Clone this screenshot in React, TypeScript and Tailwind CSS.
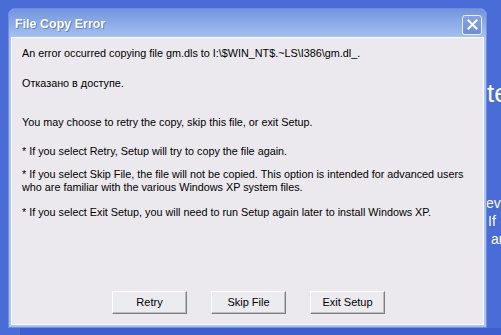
import React from "react";

const font = { fontFamily: '"Liberation Sans", Arial, sans-serif' };

function Btn({ label }: { label: string }) {
  return (
    <div className="w-[75px] h-[23px] flex items-center justify-center text-[11px] text-black bg-[#ecebef] border border-t-white border-l-white border-b-[#7d7d7d] border-r-[#7d7d7d] shadow-[inset_-1px_-1px_0_#bdbdc4]">
      {label}
    </div>
  );
}

export default function App() {
  return (
    <div className="w-[501px] h-[335px] bg-[#4a6cd6] relative overflow-hidden" style={font}>
      <div className="absolute left-[487px] top-[80px] text-white text-[26px] leading-none whitespace-nowrap">te</div>
      <div className="absolute left-[486px] top-[194px] text-white text-[14px] leading-[18px]">
        <div>ev</div>
        <div className="ml-[2px]">If</div>
        <div className="ml-[5px]">ar</div>
      </div>
      <div className="absolute left-0 right-0 bottom-0 h-[7px] bg-[#3e5ed0] ml-[20px]" />
      <div className="relative ml-[8px] mt-[8px] w-[479px] h-[320px] rounded-t-[7px] bg-[#a9c4f0] flex flex-col border border-[#6b8fdc]">
        <div className="h-[28px] rounded-t-[6px] bg-[linear-gradient(to_bottom,#7394de_0%,#86a6e6_40%,#a4c1ef_100%)] flex items-center justify-between pl-[6px] pr-[4px]">
          <span className="text-white font-bold text-[12.5px] mt-[2px] drop-shadow-[1px_1px_0_rgba(60,90,180,0.5)]">File Copy Error</span>
          <div className="w-[20px] h-[20px] rounded-[3px] border border-[#e8efff] bg-[linear-gradient(to_bottom,#85a3e4,#6d8edb)] flex items-center justify-center mt-[3px]">
            <svg width="11" height="11" viewBox="0 0 11 11">
              <path d="M1.5 1.5 L9.5 9.5 M9.5 1.5 L1.5 9.5" stroke="white" strokeWidth="2" strokeLinecap="square" />
            </svg>
          </div>
        </div>
        <div className="flex-1 mx-[2px] mb-[2px] border border-white bg-[#ebe9ed] flex flex-col text-[10.8px] text-black leading-[13px] px-[10px] pt-[9px]">
          <p>An error occurred copying file gm.dls to I:\$WIN_NT$.~LS\I386\gm.dl_.</p>
          <p className="mt-[17px]">Отказано в доступе.</p>
          <p className="mt-[26px]">You may choose to retry the copy, skip this file, or exit Setup.</p>
          <p className="mt-[16px]">* If you select Retry, Setup will try to copy the file again.</p>
          <p className="mt-[10px]">* If you select Skip File, the file will not be copied. This option is intended for advanced users<br />who are familiar with the various Windows XP system files.</p>
          <p className="mt-[12px]">* If you select Exit Setup, you will need to run Setup again later to install Windows XP.</p>
          <div className="mt-auto mb-[10px] flex gap-[24px] ml-[90px]">
            <Btn label="Retry" />
            <Btn label="Skip File" />
            <Btn label="Exit Setup" />
          </div>
        </div>
      </div>
    </div>
  );
}
